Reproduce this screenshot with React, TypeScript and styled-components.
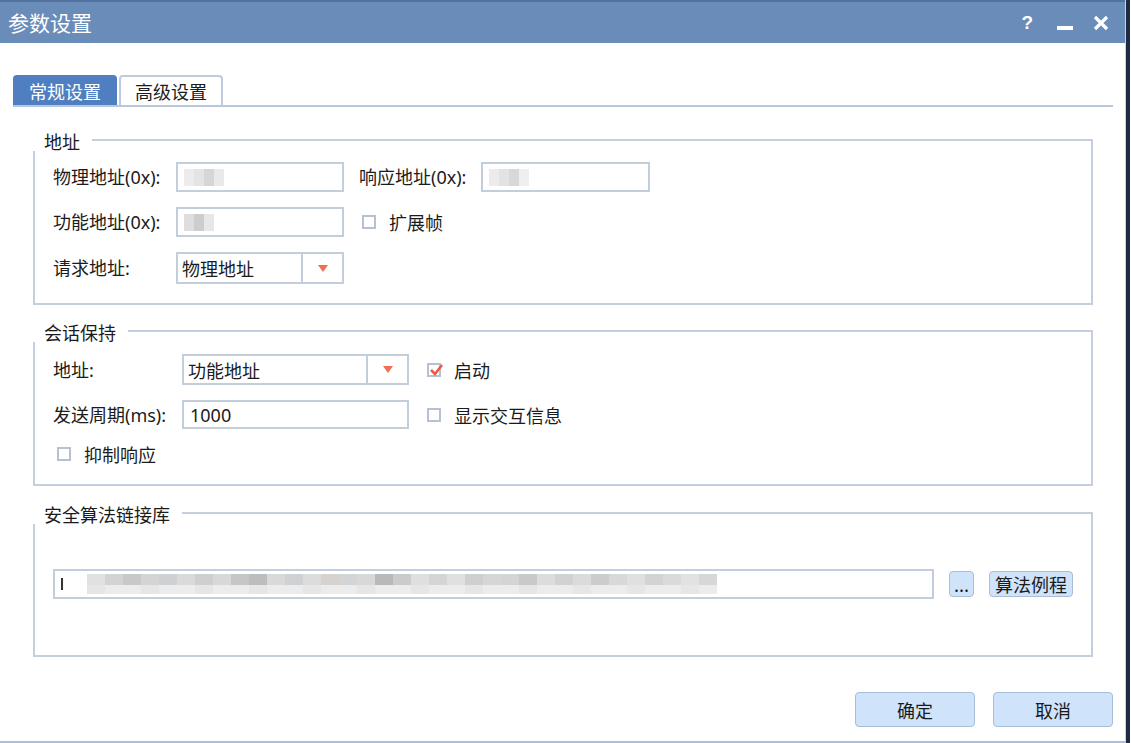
import React from "react";
import styled, { createGlobalStyle } from "styled-components";

const GlobalStyle = createGlobalStyle`
  html, body {
    margin: 0;
    padding: 0;
    background: #ffffff;
  }
  body {
    font-family: "Noto Sans", "Noto Sans CJK SC", sans-serif;
    color: #1b1b1b;
  }
`;

const Screen = styled.div`
  display: flex;
  width: 1131px;
  height: 743px;
  overflow: hidden;
`;

const Window = styled.div`
  width: 1126px;
  height: 743px;
  display: flex;
  flex-direction: column;
  box-sizing: border-box;
  border-right: 1px solid #c9d4e2;
  border-bottom: 2px solid #aebfd6;
  background: #ffffff;
`;

const EdgeStrip = styled.div`
  width: 4px;
  height: 743px;
  background: #1e2b42;
`;

const TitleBar = styled.div`
  height: 43px;
  box-sizing: border-box;
  border-top: 2px solid #52729e;
  background: #6a8cb9;
  display: flex;
  align-items: center;
  padding-left: 8px;
  flex-shrink: 0;
`;

const TitleText = styled.div`
  color: #ffffff;
  font-size: 21px;
  font-family: "Noto Sans CJK SC", sans-serif;
  flex: 1;
  line-height: 1;
`;

const TitleButtons = styled.div`
  display: flex;
  align-items: center;
  gap: 20px;
  padding-right: 16px;
  color: #ffffff;
`;

const HelpMark = styled.span`
  font-size: 19px;
  font-weight: 700;
  font-family: "Liberation Sans", sans-serif;
  margin-right: 4px;
`;

const Content = styled.div`
  flex: 1;
  display: flex;
  flex-direction: column;
  padding: 32px 13px 0 13px;
`;

const TabStrip = styled.div`
  display: flex;
  gap: 2px;
  border-bottom: 2px solid #b9c7da;
  width: 1100px;
`;

const Tab = styled.div<{ $active?: boolean }>`
  width: 104px;
  height: 30px;
  box-sizing: border-box;
  display: flex;
  align-items: center;
  justify-content: center;
  font-size: 18px;
  border-radius: 4px 4px 0 0;
  font-family: "Noto Sans CJK SC", sans-serif;
  background: ${({ $active }) => ($active ? "#4f7fc1" : "#ffffff")};
  color: ${({ $active }) => ($active ? "#ffffff" : "#1b1b1b")};
  border: 2px solid ${({ $active }) => ($active ? "#4f7fc1" : "#bfcbdc")};
  border-bottom: none;
`;

const Group = styled.div<{ $gap: number }>`
  width: 1060px;
  margin-left: 20px;
  margin-top: ${({ $gap }) => $gap}px;
  display: flex;
  flex-direction: column;
`;

const GroupHeader = styled.div`
  display: flex;
  height: 20px;
  align-items: center;
`;

const GroupTitle = styled.div`
  font-size: 18px;
  padding: 0 12px 0 11px;
  line-height: 20px;
  font-family: "Noto Sans CJK SC", sans-serif;
`;

const GroupLine = styled.div`
  flex: 1;
  align-self: flex-end;
  height: 10px;
  border-top: 2px solid #c4cfdd;
  border-right: 2px solid #c4cfdd;
`;

const GroupBody = styled.div<{ $pad: string }>`
  border: 2px solid #c4cfdd;
  border-top: none;
  padding: ${({ $pad }) => $pad};
  display: flex;
  flex-direction: column;
  gap: 15px;
`;

const Row = styled.div`
  display: flex;
  align-items: center;
`;

const Label = styled.div<{ $w: number; $offset?: number }>`
  width: ${({ $w }) => $w}px;
  margin-left: ${({ $offset }) => $offset ?? 0}px;
  flex-shrink: 0;
  font-size: 18px;
  line-height: 22px;
  white-space: nowrap;
  font-family: "Noto Sans", "Noto Sans CJK SC", sans-serif;
`;

const TextBox = styled.div<{ $w: number; $h?: number }>`
  width: ${({ $w }) => $w}px;
  height: ${({ $h }) => $h ?? 30}px;
  box-sizing: border-box;
  border: 2px solid #c3cedc;
  background: #ffffff;
  display: flex;
  align-items: center;
  padding-left: 6px;
  font-size: 18px;
  flex-shrink: 0;
  font-family: "Noto Sans", "Noto Sans CJK SC", sans-serif;
`;

const Select = styled.div<{ $w: number; $h?: number }>`
  width: ${({ $w }) => $w}px;
  height: ${({ $h }) => $h ?? 32}px;
  box-sizing: border-box;
  border: 2px solid #c3cedc;
  display: flex;
  flex-shrink: 0;
`;

const SelectValue = styled.div`
  flex: 1;
  display: flex;
  align-items: center;
  padding-left: 4px;
  font-size: 18px;
  font-family: "Noto Sans CJK SC", sans-serif;
`;

const SelectArrow = styled.div`
  width: 39px;
  border-left: 2px solid #c3cedc;
  display: flex;
  align-items: center;
  justify-content: center;
`;

const Check = styled.label<{ $gap: number }>`
  display: flex;
  align-items: center;
  margin-left: ${({ $gap }) => $gap}px;
  font-size: 18px;
  line-height: 20px;
  gap: 13px;
  font-family: "Noto Sans CJK SC", sans-serif;
`;

const CheckBox = styled.span`
  width: 14px;
  height: 14px;
  box-sizing: border-box;
  border: 2px solid #b6c2d2;
  background: #ffffff;
  position: relative;
  display: inline-block;
`;

const CheckMark = styled.svg`
  position: absolute;
  left: -1px;
  top: -2px;
`;

const SmallButton = styled.button<{ $w: number }>`
  width: ${({ $w }) => $w}px;
  height: 26px;
  box-sizing: border-box;
  border: 1px solid #a9bdd6;
  border-radius: 4px;
  background: #cfe3fb;
  font-size: 18px;
  padding: 0;
  color: #1b1b1b;
  font-family: "Noto Sans CJK SC", sans-serif;
  margin-left: 15px;
  display: flex;
  align-items: center;
  justify-content: center;
  line-height: 1;
`;

const Footer = styled.div`
  display: flex;
  justify-content: flex-end;
  gap: 18px;
  margin-top: 35px;
  width: 1100px;
`;

const DialogButton = styled.button`
  width: 120px;
  height: 35px;
  box-sizing: border-box;
  border: 1px solid #a9bdd6;
  border-radius: 4px;
  background: #cfe3fb;
  font-size: 18px;
  color: #1b1b1b;
  font-family: "Noto Sans CJK SC", sans-serif;
`;

const Blur = styled.svg`
  display: block;
`;

const Caret = () => (
  <svg width="10" height="7" viewBox="0 0 10 7">
    <path d="M0 0 H10 L5 7 Z" fill="#f26d55" />
  </svg>
);

const Tick = () => (
  <CheckMark width="16" height="16" viewBox="0 0 16 16">
    <path d="M3 7 L7 11 L14 2" fill="none" stroke="#ea5b45" strokeWidth="2.6" />
  </CheckMark>
);

const Redacted: React.FC<{ shades: string[] }> = ({ shades }) => (
  <Blur width={shades.length * 10} height="17">
    {shades.map((c, i) => (
      <rect key={i} x={i * 10} y={0} width={10} height={17} fill={c} />
    ))}
  </Blur>
);

const topRow = [
  "#e1e1e1", "#d3d3d3", "#c8c8c8", "#d4d4d4", "#cfd0d2", "#dadada", "#cfcfcf",
  "#d8d8d8", "#c6c6c6", "#bbbdbf", "#d9d9d9", "#d0d1d3", "#dcdcdc", "#d6d2cf",
  "#d2d4d6", "#d8d8d8", "#b7b9bb", "#cbcbcb", "#dfdfdf", "#d5d5d5", "#e0e0e0",
  "#cfcfcf", "#d6d6d6", "#d4d4d4", "#c9c9c9", "#dcdcdc", "#d2d2d2", "#dbdbdb",
  "#cccccc", "#d8d8d8", "#e0e0e0", "#d3d3d3", "#dadada", "#e2e2e2", "#d7d7d7",
];
const bottomRow = topRow.map((_, i) => (i % 3 === 0 ? "#e6e6e6" : "#ececec"));

const LongPath = () => (
  <Blur width="660" height="24">
    <rect x="0" y="6" width="2" height="12" fill="#333" />
    {topRow.map((c, i) => (
      <rect key={"t" + i} x={26 + i * 18} y={2} width={18} height={11} fill={c} />
    ))}
    {bottomRow.map((c, i) => (
      <rect key={"b" + i} x={26 + i * 18} y={13} width={18} height={9} fill={c} />
    ))}
  </Blur>
);

const App: React.FC = () => {
  return (
    <>
      <GlobalStyle />
      <Screen>
        <Window>
          <TitleBar>
            <TitleText>参数设置</TitleText>
            <TitleButtons>
              <HelpMark>?</HelpMark>
              <svg width="16" height="16" viewBox="0 0 16 16">
                <rect x="0" y="11" width="16" height="4" fill="#ffffff" />
              </svg>
              <svg width="16" height="16" viewBox="0 0 16 16">
                <path d="M2 2 L14 14 M14 2 L2 14" stroke="#ffffff" strokeWidth="3.2" />
              </svg>
            </TitleButtons>
          </TitleBar>

          <Content>
            <TabStrip>
              <Tab $active>常规设置</Tab>
              <Tab>高级设置</Tab>
            </TabStrip>

            <Group $gap={24}>
              <GroupHeader>
                <GroupTitle>地址</GroupTitle>
                <GroupLine />
              </GroupHeader>
              <GroupBody $pad="11px 18px 19px">
                <Row>
                  <Label $w={123}>物理地址(0x):</Label>
                  <TextBox $w={168}>
                    <Redacted shades={["#ececec", "#e4e4e4", "#d6d6d6", "#e9e9e9"]} />
                  </TextBox>
                  <Label $w={122} $offset={15}>响应地址(0x):</Label>
                  <TextBox $w={169}>
                    <Redacted shades={["#ececec", "#e3e3e3", "#d8d8d8", "#efefef"]} />
                  </TextBox>
                </Row>
                <Row>
                  <Label $w={123}>功能地址(0x):</Label>
                  <TextBox $w={168}>
                    <Redacted shades={["#dedede", "#cdcdcd", "#e7e7e7"]} />
                  </TextBox>
                  <Check $gap={18}>
                    <CheckBox />
                    扩展帧
                  </Check>
                </Row>
                <Row>
                  <Label $w={123}>请求地址:</Label>
                  <Select $w={168}>
                    <SelectValue>物理地址</SelectValue>
                    <SelectArrow>
                      <Caret />
                    </SelectArrow>
                  </Select>
                </Row>
              </GroupBody>
            </Group>

            <Group $gap={17}>
              <GroupHeader>
                <GroupTitle>会话保持</GroupTitle>
                <GroupLine />
              </GroupHeader>
              <GroupBody $pad="12px 18px 20px">
                <Row>
                  <Label $w={129}>地址:</Label>
                  <Select $w={227} $h={31}>
                    <SelectValue>功能地址</SelectValue>
                    <SelectArrow>
                      <Caret />
                    </SelectArrow>
                  </Select>
                  <Check $gap={18}>
                    <CheckBox>
                      <Tick />
                    </CheckBox>
                    启动
                  </Check>
                </Row>
                <Row>
                  <Label $w={129}>发送周期(ms):</Label>
                  <TextBox $w={227} $h={29}>1000</TextBox>
                  <Check $gap={18}>
                    <CheckBox />
                    显示交互信息
                  </Check>
                </Row>
                <Row>
                  <Check $gap={4}>
                    <CheckBox />
                    抑制响应
                  </Check>
                </Row>
              </GroupBody>
            </Group>

            <Group $gap={18}>
              <GroupHeader>
                <GroupTitle>安全算法链接库</GroupTitle>
                <GroupLine />
              </GroupHeader>
              <GroupBody $pad="45px 18px 56px">
                <Row>
                  <TextBox $w={881}>
                    <LongPath />
                  </TextBox>
                  <SmallButton $w={25}>...</SmallButton>
                  <SmallButton $w={85}>算法例程</SmallButton>
                </Row>
              </GroupBody>
            </Group>

            <Footer>
              <DialogButton>确定</DialogButton>
              <DialogButton>取消</DialogButton>
            </Footer>
          </Content>
        </Window>
        <EdgeStrip />
      </Screen>
    </>
  );
};

export default App;
